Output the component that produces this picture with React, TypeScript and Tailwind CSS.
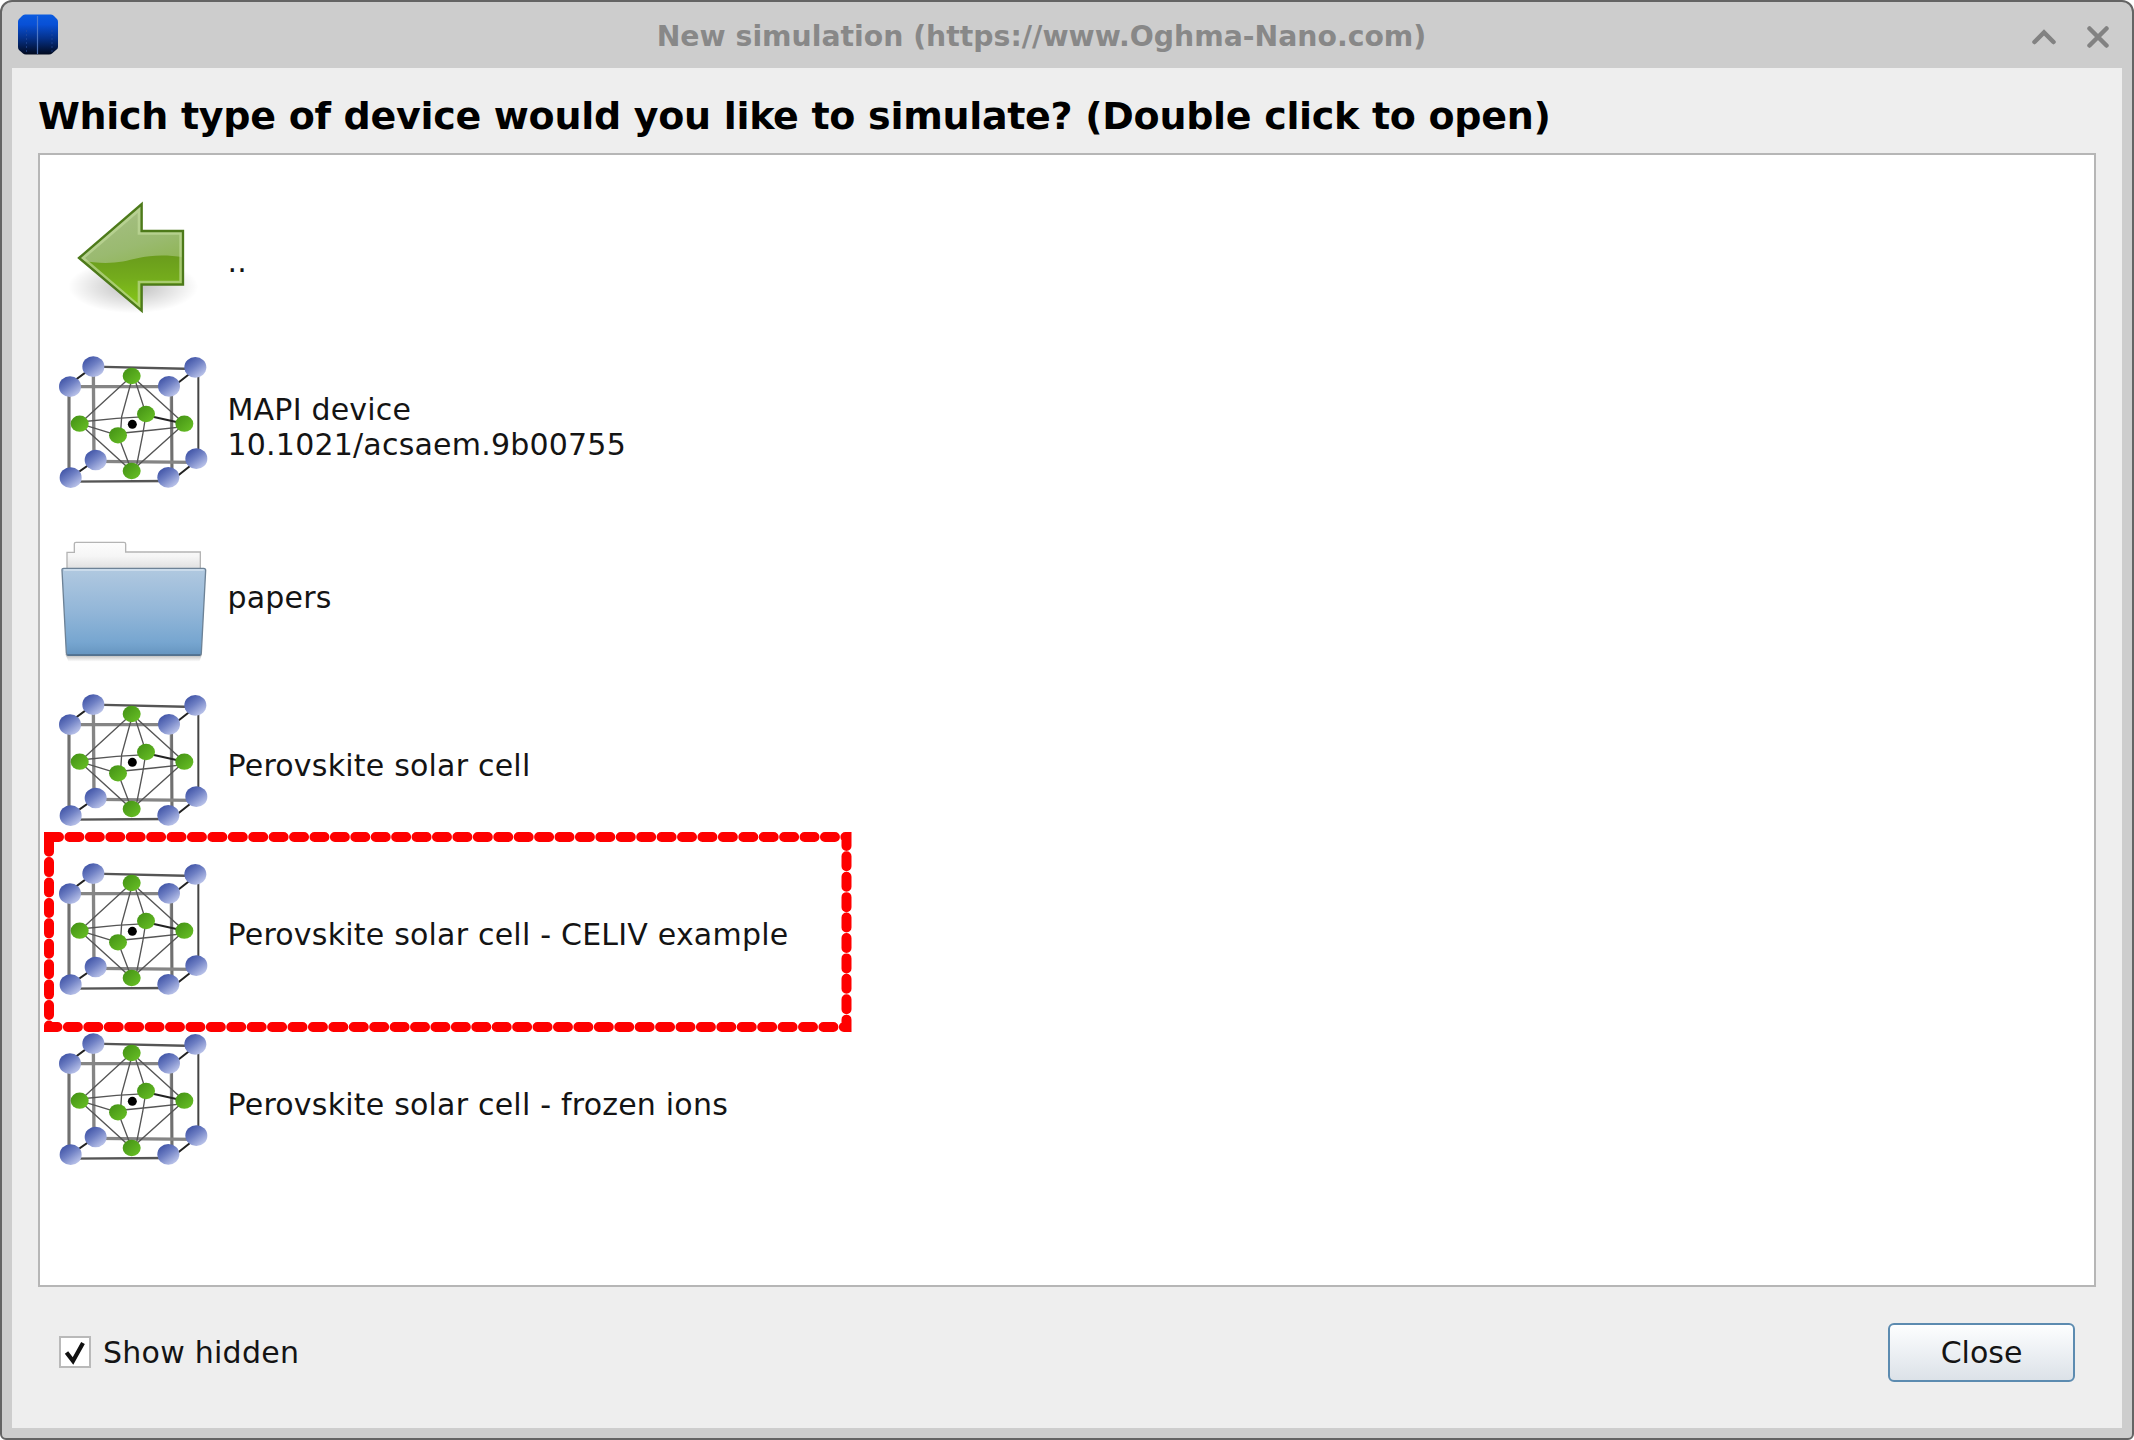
import React from "react";

function AppLogo() {
  return (
    <svg width="42" height="42" viewBox="0 0 42 42">
      <defs>
        <linearGradient id="logo" x1="0" y1="0" x2="0" y2="1">
          <stop offset="0" stopColor="#0a5be0" />
          <stop offset="0.25" stopColor="#0850d6" />
          <stop offset="0.6" stopColor="#05318a" />
          <stop offset="1" stopColor="#020a1e" />
        </linearGradient>
      </defs>
      <path d="M8 .5H34Q36 .5 37 2L40 5Q41 6 41 8V33Q41 35 39 36L35 39.500Q34 40.500 32 40.500H9Q7 40.500 6 39.500L2 36Q1 35 1 33V8Q1 6 2 5L5 2Q6 .5 8 .5z" fill="url(#logo)" />
      <path d="M20.500 2v38" stroke="#5f86cf" strokeWidth="1.200" opacity=".8" />
      <path d="M9.500 16v22M35 16v22" stroke="#2a4fa0" strokeWidth="1" strokeDasharray="2 2" opacity=".6" />
    </svg>
  );
}

function BackArrow() {
  return (
    <svg width="186" height="169" viewBox="-30 -18 558 507" className="shrink-0">
      <defs>
        <linearGradient id="arrowTop" x1="0" y1="0" x2="0.300" y2="1">
          <stop offset="0" stopColor="#a9c08a" />
          <stop offset="0.500" stopColor="#9aba70" />
          <stop offset="1" stopColor="#83b036" />
        </linearGradient>
        <linearGradient id="arrowLow" x1="0" y1="0" x2="0" y2="1">
          <stop offset="0" stopColor="#6a9c1c" />
          <stop offset="0.400" stopColor="#74ac1c" />
          <stop offset="1" stopColor="#8bd018" />
        </linearGradient>
        <radialGradient id="arrowShade">
          <stop offset="0" stopColor="#000" stopOpacity=".26" />
          <stop offset="1" stopColor="#000" stopOpacity="0" />
        </radialGradient>
        <clipPath id="arrowClip">
          <path d="M86 234 274 74V153H400V314H274V392z" />
        </clipPath>
      </defs>
      <ellipse cx="250" cy="320" rx="195" ry="80" fill="url(#arrowShade)" />
      <path d="M86 234 274 74V153H400V314H274V392z" fill="url(#arrowTop)" />
      <path d="M90 240C170 258 220 245 262 235S350 224 400 232V400H90z" fill="url(#arrowLow)" clipPath="url(#arrowClip)" />
      <path d="M99 234 267 90V160H392V306H267V378z" fill="none" stroke="#c3dc9d" strokeWidth="8" opacity=".65" />
      <path d="M87 234 275 72V153H399V314H275V392z" fill="none" stroke="#4d7a1a" strokeWidth="7" />
    </svg>
  );
}

const blueAtoms = [
  [160, 80], [466, 82], [387, 139], [90, 140], [167, 360], [469, 356], [385, 412], [92, 413],
];
const greenAtoms = [
  [275, 108], [119, 251], [433, 251], [318, 222], [234, 286], [275, 393],
];

function Crystal() {
  return (
    <svg width="186" height="169" viewBox="0 9 558 507" className="shrink-0">
      <defs>
        <linearGradient id="blueAtom" x1="0.150" y1="0.050" x2="0.850" y2="0.950">
          <stop offset="0" stopColor="#3c50a4" />
          <stop offset="0.450" stopColor="#6f80c4" />
          <stop offset="1" stopColor="#c3cbee" />
        </linearGradient>
        <linearGradient id="greenAtom" x1="0.100" y1="0.100" x2="0.900" y2="0.900">
          <stop offset="0" stopColor="#459416" />
          <stop offset="1" stopColor="#66bd24" />
        </linearGradient>
      </defs>
      <g fill="none" stroke="#6e6e6e" strokeWidth="10">
        <path d="M87 140V413M160 80L162 360M394 139L396 412" stroke="#858585" />
        <path d="M87 140V413M396 139V412" stroke="#666" strokeWidth="4" />
        <path d="M90 140H387M167 364L469 367" stroke="#858585" />
        <path d="M160 80L466 87M92 425L385 423" stroke="#555" strokeWidth="7" />
        <path d="M475 82V356" stroke="#444" strokeWidth="6" />
      </g>
      <path d="M90 132L160 80M387 150L466 88M92 413L167 360M400 418L469 363" stroke="#222" strokeWidth="6" />
      <g fill="none" stroke="#555" strokeWidth="4">
        <path d="M275 108L119 251L275 393L433 251z" />
        <path d="M275 120L245 230L242 275M285 120L318 222L308 285L290 375M234 286L275 393" />
        <path d="M119 246L230 235L318 230M119 251L234 286M250 279L340 270L433 260" />
      </g>
      <path d="M318 226L433 251" stroke="#222" strokeWidth="6" />
      <circle cx="277" cy="253" r="13.500" fill="#000" />
      {blueAtoms.map(([x, y]) => (
        <ellipse key={x + "-" + y} cx={x} cy={y} rx="33" ry="31" fill="url(#blueAtom)" />
      ))}
      {greenAtoms.map(([x, y]) => (
        <ellipse key={x + "-" + y} cx={x} cy={y} rx="27" ry="24.500" fill="url(#greenAtom)" />
      ))}
    </svg>
  );
}

function Folder() {
  return (
    <svg width="186" height="169" viewBox="0 -23 558 507" className="shrink-0">
      <defs>
        <linearGradient id="folderFront" x1="0" y1="0" x2="0" y2="1">
          <stop offset="0" stopColor="#b1c9e0" />
          <stop offset="0.500" stopColor="#92b6d8" />
          <stop offset="0.850" stopColor="#77a6d0" />
          <stop offset="1" stopColor="#6594bf" />
        </linearGradient>
        <linearGradient id="folderBack" x1="0" y1="0" x2="0" y2="1">
          <stop offset="0" stopColor="#fdfdfd" />
          <stop offset="0.500" stopColor="#f6f6f6" />
          <stop offset="1" stopColor="#dedede" />
        </linearGradient>
        <linearGradient id="folderShade" x1="0" y1="0" x2="0" y2="1">
          <stop offset="0" stopColor="#777" stopOpacity=".6" />
          <stop offset="1" stopColor="#999" stopOpacity="0" />
        </linearGradient>
      </defs>
      <path d="M76 404H486L478 426H86z" fill="url(#folderShade)" />
      <path d="M81 150V98H103V72Q103 68 108 68H252Q257 68 257 73V97H481V150z" fill="url(#folderBack)" stroke="#b4b4b4" strokeWidth="4" />
      <path d="M71 146H491Q497 146 497 152L484 400Q484 407 477 407H86Q80 407 79 400L66 152Q65 146 71 146z" fill="url(#folderFront)" stroke="#6d8296" strokeWidth="4" />
      <path d="M72 151H491" stroke="#d3e2ef" strokeWidth="4" />
      <path d="M82 406H481" stroke="#4d6d8b" strokeWidth="4" />
    </svg>
  );
}

function Highlight() {
  return (
    <svg width="810" height="202" viewBox="43 831 810 202" className="absolute left-[3px] top-[676px] pointer-events-none">
      <path d="M49 837H846.500V1027H49z" fill="none" stroke="#fe0000" strokeWidth="10" strokeLinecap="round" strokeDasharray="10 10.420" />
      <path d="M44 832h10v17a5 5 0 0 1-10 0z" fill="#fe0000" />
    </svg>
  );
}

const rows: { icon: React.ReactNode; label: React.ReactNode }[] = [
  { icon: <BackArrow />, label: <span className="block pt-1.5">..</span> },
  { icon: <Crystal />, label: <span className="block pb-0.5">MAPI device<br />10.1021/acsaem.9b00755</span> },
  { icon: <Folder />, label: <span className="block pt-0.5">papers</span> },
  { icon: <Crystal />, label: "Perovskite solar cell" },
  { icon: <Crystal />, label: "Perovskite solar cell - CELIV example" },
  { icon: <Crystal />, label: "Perovskite solar cell - frozen ions" },
];

export default function App() {
  return (
    <div className="h-[1440px] w-[2134px] overflow-hidden bg-white font-['DejaVu_Sans',sans-serif] text-[30px] text-[#141414]">
      <div className="flex h-full w-full flex-col rounded-t-[12px] rounded-b-[6px] border-2 border-[#646464] bg-[#cdcdcd] px-[10px] pb-[10px]">
        <header className="flex h-[66px] shrink-0 items-center justify-between">
          <div className="flex w-[200px] pl-[5px]"><AppLogo /></div>
          <h1 className="pt-[5px] pr-[51px] whitespace-nowrap text-[28.3px] font-bold text-[#888888]">New simulation (https://www.Oghma-Nano.com)</h1>
          <div className="flex w-[200px] items-center justify-end gap-[30px] pr-[12px] pt-px text-[#828282]">
            <svg width="24" height="24" viewBox="0 0 24 24" fill="none" stroke="currentColor" strokeWidth="4.500"><path d="M2.500 18L12 8.500L21.500 18" strokeLinecap="round" /></svg>
            <svg width="24" height="24" viewBox="0 0 24 24" fill="none" stroke="currentColor" strokeWidth="4.500"><path d="M3.500 4.500L20.500 21.500M20.500 4.500L3.500 21.500" strokeLinecap="round" /></svg>
          </div>
        </header>
        <main className="flex flex-1 flex-col bg-[#eeeeee] px-[26px]">
          <h2 className="flex h-[85px] shrink-0 items-center pt-[10px] text-[38px] leading-[44px] font-bold tracking-[-0.3px] whitespace-nowrap text-black">
            Which type of device would you like to simulate? (Double click to open)
          </h2>
          <section className="relative h-[1134px] shrink-0 border-2 border-[#b6b6b6] bg-white pt-[19px]">
            {rows.map((row, i) => (
              <div key={i} className="flex h-[169.1px] items-center">
                {row.icon}
                <div className="pl-[1.5px] leading-[35px] tracking-[0.21px] whitespace-nowrap">{row.label}</div>
              </div>
            ))}
            <Highlight />
          </section>
          <footer className="flex h-[130px] items-center justify-between pr-[21px] pl-[21px]">
            <label className="flex items-center">
              <span className="flex size-[32px] items-center justify-center border-2 border-[#b9b9b9] bg-white">
                <svg width="28" height="28" viewBox="0 0 28 28"><path d="M5.500 14.500L12 23L22 5" fill="none" stroke="#111" strokeWidth="4.200" /></svg>
              </span>
              <span className="ml-[12px] tracking-[0.25px]">Show hidden</span>
            </label>
            <button className="h-[59px] w-[187px] rounded-[6px] border-2 border-[#5c8bb0] bg-linear-to-b from-[#fdfeff] to-[#dce2e8]">Close</button>
          </footer>
        </main>
      </div>
    </div>
  );
}
